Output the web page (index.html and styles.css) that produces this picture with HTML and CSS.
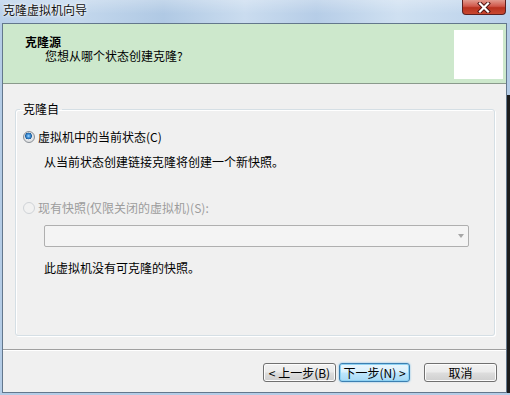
FILE: index.html
```html
<!DOCTYPE html>
<html lang="zh-CN">
<head>
<meta charset="utf-8">
<title>克隆虚拟机向导</title>
<link rel="stylesheet" href="styles.css">
</head>
<body>
<div class="window">
  <div class="titlebar">
    <span class="title">克隆虚拟机向导</span>
    <span class="close">
      <svg width="14" height="11" viewBox="0 0 14 11">
        <path d="M3 1.5 L11 9.5 M11 1.5 L3 9.5" stroke="#4a1010" stroke-width="4" stroke-linecap="square"/>
        <path d="M3 1.5 L11 9.5 M11 1.5 L3 9.5" stroke="#ffffff" stroke-width="2.2" stroke-linecap="square"/>
      </svg>
    </span>
  </div>
  <div class="frame">
    <div class="client">
      <div class="header">
        <div class="header-text">
          <div class="h-title">克隆源</div>
          <div class="h-sub">您想从哪个状态创建克隆?</div>
        </div>
        <div class="logo"></div>
      </div>
      <div class="content">
        <fieldset class="group">
          <legend>克隆自</legend>
          <div class="opt opt-first"><span class="radio checked"></span><span>虚拟机中的当前状态(C)</span></div>
          <div class="desc">从当前状态创建链接克隆将创建一个新快照。</div>
          <div class="opt opt-disabled"><span class="radio"></span><span>现有快照(仅限关闭的虚拟机)(S):</span></div>
          <div class="combo"><span class="arrow"></span></div>
          <div class="note">此虚拟机没有可克隆的快照。</div>
        </fieldset>
      </div>
      <div class="sep"></div>
      <div class="footer">
        <button class="btn btn-back">&lt; 上一步(B)</button>
        <button class="btn btn-next">下一步(N) &gt;</button>
        <button class="btn btn-cancel">取消</button>
      </div>
    </div>
    <div class="rstrip"></div>
  </div>
</div>
</body>
</html>
```

FILE: styles.css
```css
html, body {
  margin: 0;
  padding: 0;
}
body {
  width: 510px;
  height: 395px;
  overflow: hidden;
  font-family: "Noto Sans CJK SC", "Liberation Sans", sans-serif;
  font-size: 12px;
  color: #000;
}
.window {
  width: 510px;
  height: 395px;
  display: flex;
  flex-direction: column;
  background: #b4cce6;
}
.titlebar {
  height: 23px;
  display: flex;
  align-items: flex-start;
  padding-left: 3px;
  background:
    linear-gradient(180deg, rgba(255,255,255,0.25), rgba(255,255,255,0) 60%),
    linear-gradient(90deg, #b9d0ea 0%, #c4d8ed 15%, #b0c9e4 32%, #cadcef 48%, #b6cde7 62%, #cfe0f1 78%, #b9d0ea 100%);
}
.title {
  padding-top: 3px;
  line-height: 14px;
  font-size: 12px;
  color: #111;
  text-shadow: 0 0 4px #fff, 0 0 2px #fff;
}
.close {
  margin-left: auto;
  margin-right: 4px;
  width: 44px;
  height: 15px;
  box-sizing: border-box;
  border: 1px solid #5b2020;
  border-top: none;
  border-radius: 0 0 4px 4px;
  background: linear-gradient(180deg, #e29a8e 0%, #d0574a 45%, #b8311f 55%, #c9482f 100%);
  display: flex;
  align-items: center;
  justify-content: center;
}
.frame {
  flex: 1;
  display: flex;
  padding-left: 2px;
  padding-bottom: 2px;
}
.client {
  width: 503px;
  border: 1px solid #63778c;
  background: #f0f0f0;
  display: flex;
  flex-direction: column;
}
.rstrip {
  flex: 1;
  background: linear-gradient(180deg, #b4cce6 0, #b4cce6 72px, #1c1c1c 72px, #1c1c1c 100%);
}
.header {
  height: 59px;
  background: #cde8cc;
  border-bottom: 1px solid #8a9a8c;
  display: flex;
  align-items: flex-start;
}
.header-text {
  flex: 1;
  padding-top: 11px;
  padding-left: 22px;
  line-height: 14px;
}
.h-title {
  font-weight: bold;
  font-size: 12px;
}
.h-sub {
  padding-left: 20px;
}
.logo {
  width: 49px;
  height: 49px;
  margin-top: 6px;
  margin-right: 3px;
  background: #ffffff;
}
.content {
  height: 265px;
  box-sizing: border-box;
  padding: 18px 11px 0 12px;
}
.group {
  margin: 0;
  padding: 0 0 59px 0;
  min-width: 0;
  border: 1px solid #d5dfe5;
  border-radius: 3px;
  box-shadow: inset 1px 1px 0 #fff, 1px 1px 0 #fff;
}
.group legend {
  margin-left: 4px;
  padding: 0 3px;
  line-height: 14px;
  font-size: 12px;
}
.opt {
  display: flex;
  align-items: center;
  height: 16px;
  line-height: 16px;
  padding-left: 7px;
}
.opt-first {
  margin-top: 13px;
}
.opt-disabled {
  margin-top: 30px;
  color: #9c9c9c;
}
.radio {
  width: 12px;
  height: 12px;
  box-sizing: border-box;
  border-radius: 50%;
  border: 1px solid #8b9097;
  background: radial-gradient(circle at 50% 50%, #f6f6f6 0, #dcdee0 70%, #cfd1d4 100%);
  margin-right: 3px;
  flex: none;
}
.radio.checked {
  background:
    radial-gradient(circle at 45% 40%, #a8dcff 0, #4b9ae0 1.5px, #1d5f9e 3.2px, rgba(29,95,158,0) 3.6px),
    radial-gradient(circle at 50% 50%, #f6f6f6 0, #dcdee0 70%, #cfd1d4 100%);
}
.opt-disabled .radio {
  border-color: #cfd3d7;
  background: #f1f1f1;
}
.desc {
  margin-top: 9px;
  padding-left: 28px;
  line-height: 16px;
}
.combo {
  margin-top: 9px;
  margin-left: 28px;
  width: 425px;
  height: 22px;
  box-sizing: border-box;
  border: 1px solid #afafaf;
  border-radius: 2px;
  background: #f4f4f4;
  display: flex;
  align-items: center;
  justify-content: flex-end;
  padding-right: 4px;
}
.arrow {
  width: 0;
  height: 0;
  border-left: 3.5px solid transparent;
  border-right: 3.5px solid transparent;
  border-top: 4px solid #a6a6a6;
}
.note {
  margin-top: 13px;
  padding-left: 28px;
  line-height: 16px;
}
.sep {
  height: 1px;
  border-top: 1px solid #a0a0a0;
  background: #fff;
}
.footer {
  flex: 1;
  display: flex;
  align-items: flex-start;
  justify-content: flex-end;
  padding-top: 12px;
  padding-right: 9px;
}
.btn {
  height: 19px;
  box-sizing: border-box;
  padding: 0;
  margin: 0;
  font-family: "Noto Sans CJK SC", "Liberation Sans", sans-serif;
  font-size: 12px;
  line-height: 16px;
  color: #000;
  border: 1px solid #707070;
  border-radius: 3px;
  background: linear-gradient(180deg, #f2f2f2 0%, #ebebeb 48%, #dddddd 52%, #cfcfcf 100%);
  box-shadow: inset 0 0 0 1px #fcfcfc;
}
.btn-back {
  width: 73px;
}
.btn-next {
  width: 71px;
  margin-left: 3px;
  border-color: #3c7fb1;
  background: linear-gradient(180deg, #eaf6fd 0%, #d9f0fc 48%, #bee6fd 52%, #a7d9f5 100%);
  box-shadow: inset 0 0 0 1px #8ed2f3, 0 0 2px #66b8e8;
}
.btn-cancel {
  width: 73px;
  margin-left: 14px;
}
```
